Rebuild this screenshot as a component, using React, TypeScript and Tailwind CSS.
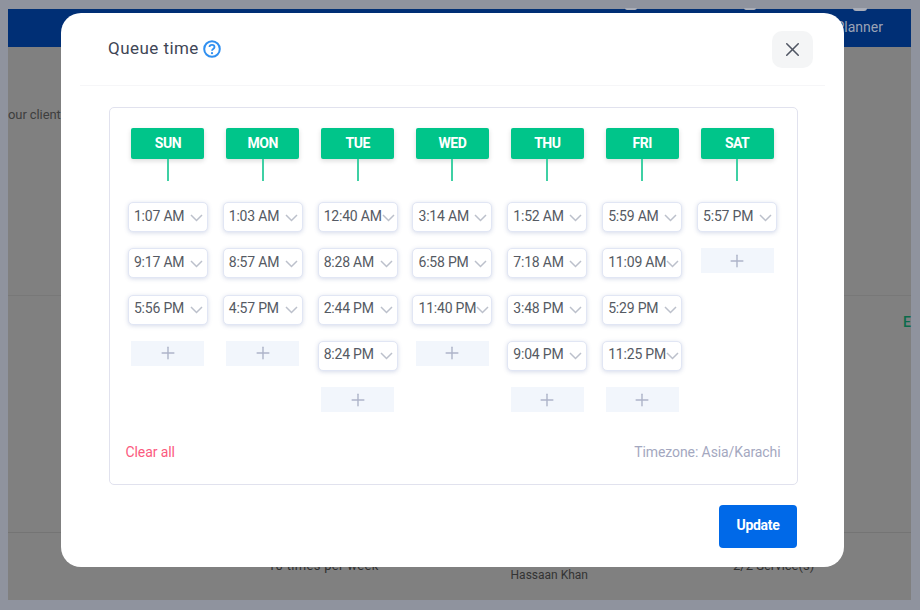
import React from 'react';
import { Plus, X } from 'lucide-react';

const days = [
  { name: 'SUN', times: ['1:07 AM', '9:17 AM', '5:56 PM'] },
  { name: 'MON', times: ['1:03 AM', '8:57 AM', '4:57 PM'] },
  { name: 'TUE', times: ['12:40 AM', '8:28 AM', '2:44 PM', '8:24 PM'] },
  { name: 'WED', times: ['3:14 AM', '6:58 PM', '11:40 PM'] },
  { name: 'THU', times: ['1:52 AM', '7:18 AM', '3:48 PM', '9:04 PM'] },
  { name: 'FRI', times: ['5:59 AM', '11:09 AM', '5:29 PM', '11:25 PM'] },
  { name: 'SAT', times: ['5:57 PM'] },
];

function TimeSelect({ time }: { time: string }) {
  return (
    <div className="flex h-[30px] w-[80px] items-center rounded-[5px] border border-[#e1e6f4] bg-white pb-[2px] pl-[5px] pr-[4px] text-[14px] tracking-[-0.2px] text-[#555a63] shadow-[0_1px_4px_rgba(90,110,170,0.25)]">
      <span className="whitespace-nowrap">{time}</span>
      <svg viewBox="0 0 13 8" className="ml-auto mt-[3px] h-[8px] w-[13px] shrink-0" fill="none">
        <path d="M1 1l5.5 5.5L12 1" stroke="#bcc0cb" strokeWidth="1.5" />
      </svg>
    </div>
  );
}

function DayColumn({ name, times }: { name: string; times: string[] }) {
  return (
    <div className="flex flex-col items-center">
      <div className="flex h-[31px] w-[73px] items-center justify-center rounded-[2px] bg-[#00c58a] text-[14px] font-bold tracking-[-0.5px] text-white shadow-[0_2px_5px_rgba(0,0,0,0.14)]">
        {name}
      </div>
      <div className="h-[22px] w-[2px] bg-[#3fd0a4]" />
      <div className="mt-[21px] flex flex-col items-center gap-[16.3px]">
        {times.map((time) => (
          <TimeSelect key={time} time={time} />
        ))}
        <div className="flex h-[25px] w-[73px] items-center justify-center bg-[#f2f6fc]">
          <Plus className="h-[20px] w-[20px] text-[#aeb4c9]" strokeWidth={1.7} />
        </div>
      </div>
    </div>
  );
}

export default function App() {
  return (
    <div className="relative h-[610px] w-[920px] overflow-hidden bg-[#8f939e] px-2 pt-[9px] font-['Roboto',sans-serif]">
      {/* bottoms of the nav icons, cut off by the top of the capture */}
      <div className="absolute left-[625px] top-[8px] h-[2px] w-[12px] rounded-b-[2px] bg-[#a9adb8]" />
      <div className="absolute left-[744px] top-[8px] h-[2px] w-[12px] rounded-b-[2px] bg-[#a9adb8]" />
      <div className="absolute left-[853px] top-[8px] h-[3px] w-[14px] rounded-b-[3px] bg-[#a9adb8]" />

      {/* dimmed page behind the modal */}
      <div className="flex h-[591px] w-[903px] flex-col bg-[#808080] text-[#2f2f2f]">
        <header className="flex h-[38px] shrink-0 items-center justify-end bg-[#002f75] pb-[2px] pr-[28px] text-[14px] text-[#9ba3b5]">
          Planner
        </header>
        <div className="flex h-[249px] items-start border-b border-[#787878]">
          <span className="mt-[58px] whitespace-nowrap text-[13px] tracking-[-0.1px] text-[#3e3e3e]">our client</span>
        </div>
        <div className="flex h-[237px] justify-end border-b border-[#747474] pt-[16px] text-[14px] font-medium text-[#0b6b4a]">
          E
        </div>
        <div className="flex grow pl-[260px] pt-[23px] text-[13px]">
          <span className="tracking-[0.3px]">10 times per week</span>
          <span className="ml-[132px] mt-[10px] text-[12px] text-[#333]">Hassaan Khan</span>
          <span className="ml-[145px]">2/2 Service(s)</span>
        </div>
      </div>

      {/* modal */}
      <div className="absolute left-[61px] top-[13px] flex h-[554px] w-[783px] flex-col rounded-[20px] bg-white">
        <div className="mx-[19px] flex h-[73px] items-center justify-between border-b border-[#f6f6f8] pl-[28px] pr-[12px]">
          <div className="flex items-center gap-[4px] text-[17px] font-normal tracking-[0.45px] text-[#3f4656]">
            Queue time
            <svg viewBox="0 0 18 18" className="h-[18px] w-[18px]" fill="none">
              <circle cx="9" cy="9" r="7.8" stroke="#2f8ff0" strokeWidth="2" />
              <path d="M6.5 7.1c0-1.4 1.1-2.2 2.5-2.2s2.5.8 2.5 2.1c0 2-2.5 1.9-2.5 3.7" stroke="#2f8ff0" strokeWidth="1.8" />
              <circle cx="9" cy="13.2" r="1.1" fill="#2f8ff0" />
            </svg>
          </div>
          <button className="flex h-[37px] w-[41px] items-center justify-center rounded-[10px] bg-[#f4f5f6]">
            <X className="h-[23px] w-[23px] text-[#505663]" strokeWidth={1.6} />
          </button>
        </div>

        <div className="mx-[48px] mt-[21px] flex h-[378px] w-[689px] flex-col rounded-[5px] border border-[#e1e2ee] px-[10.5px] pt-[20px]">
          <div className="grid h-[313px] w-[664px] grid-cols-7">
            {days.map((day) => (
              <DayColumn key={day.name} name={day.name} times={day.times} />
            ))}
          </div>
          <div className="mt-[1px] flex items-center justify-between pl-[5px] pr-[6px] text-[14px]">
            <span className="tracking-[-0.1px] text-[#fb5a80]">Clear all</span>
            <span className="tracking-[-0.1px] text-[#a4a8bf]">Timezone: Asia/Karachi</span>
          </div>
        </div>

        <div className="mt-[20px] flex justify-end pr-[47px]">
          <button className="h-[43px] w-[78px] rounded-[4px] bg-[#0069e8] pb-[3px] text-[14px] font-bold tracking-[-0.3px] text-white">
            Update
          </button>
        </div>
      </div>
    </div>
  );
}
